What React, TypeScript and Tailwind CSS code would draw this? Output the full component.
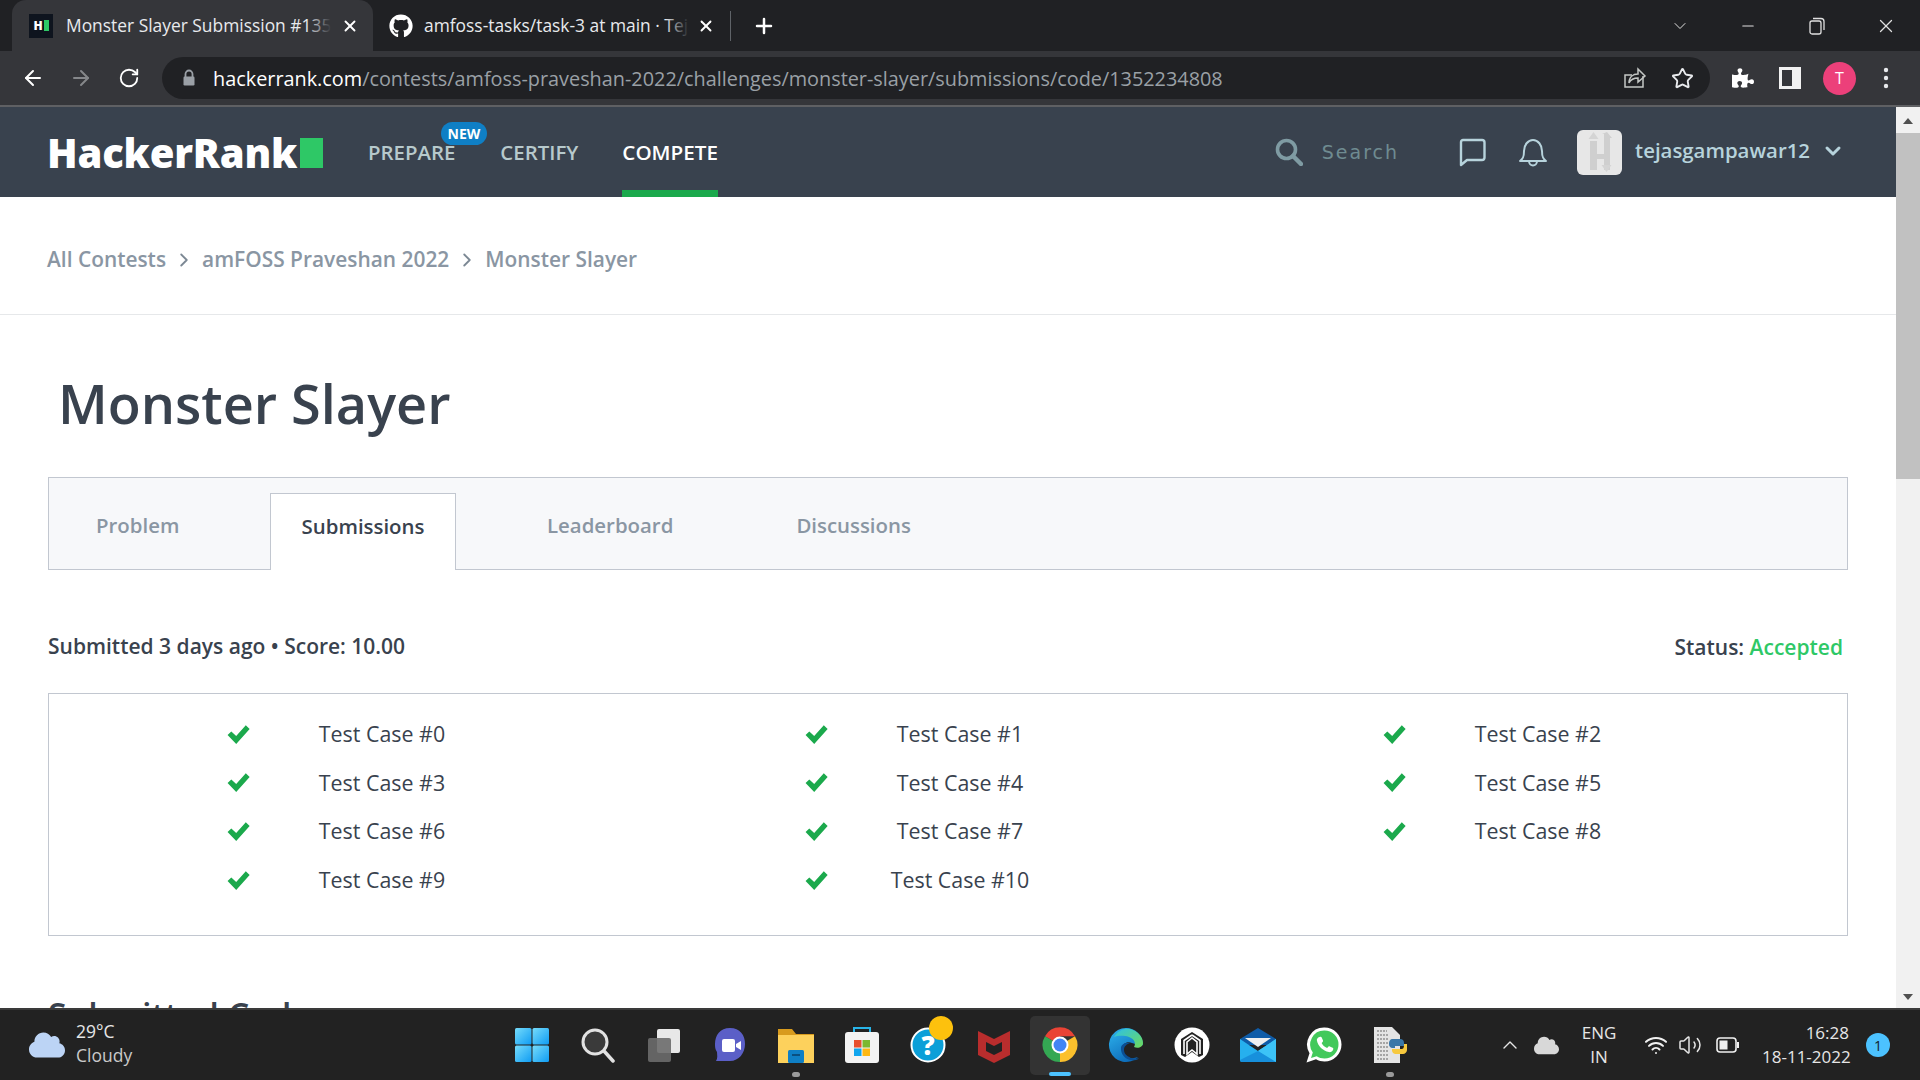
import React from "react";
import { ArrowLeft, ArrowRight, RotateCw, Star, X, Plus, Minus, ChevronDown, ChevronUp, ChevronRight, Volume2, Wifi } from "lucide-react";
import { FaGithub, FaPuzzlePiece, FaCloud } from "react-icons/fa";

const font = { fontFamily: '"Open Sans", "Noto Sans", sans-serif' };

function Lock() {
  return (
    <svg width="14" height="18" viewBox="0 0 14 18">
      <path d="M3.5 8V5a3.5 3.5 0 0 1 7 0v3" fill="none" stroke="#9aa0a6" strokeWidth="1.8" />
      <rect x="1.5" y="7.5" width="11" height="9" rx="1.2" fill="#9aa0a6" />
    </svg>
  );
}

function Share() {
  return (
    <svg width="24" height="24" viewBox="0 0 24 24" fill="none" stroke="#c4c7c5" strokeWidth="1.5">
      <path d="M20 10v11H2V9h7" />
      <path d="M6 17c0-6 4-9 9-9V3l7 7-7 6v-4c-4 0-7 1-9 5z" />
    </svg>
  );
}

function Check() {
  return (
    <svg width="25" height="21" viewBox="0 0 24 20">
      <path d="M1.5 10.5l3.6-3.4 4.7 4.4L19 1.2l3.7 3.6L9.8 19z" fill="#1ba94c" />
    </svg>
  );
}

function TestCase({ n }: { n: number }) {
  return (
    <div className="flex items-center h-[48.6px]">
      <div className="w-[47px] flex justify-center shrink-0"><Check /></div>
      <div className="w-[240px] text-center text-[21.4px] text-[#39424e]">Test Case #{n}</div>
    </div>
  );
}

function Windows() {
  return (
    <svg width="36" height="36" viewBox="0 0 36 36">
      <defs>
        <linearGradient id="w" x1="0" y1="0" x2="1" y2="1">
          <stop offset="0" stopColor="#76dcfb" />
          <stop offset="1" stopColor="#0f9cf3" />
        </linearGradient>
      </defs>
      <rect x="1" y="1" width="16.5" height="16.5" rx="1.5" fill="url(#w)" />
      <rect x="18.5" y="1" width="16.5" height="16.5" rx="1.5" fill="url(#w)" />
      <rect x="1" y="18.5" width="16.5" height="16.5" rx="1.5" fill="url(#w)" />
      <rect x="18.5" y="18.5" width="16.5" height="16.5" rx="1.5" fill="url(#w)" />
    </svg>
  );
}
function TbSearch() {
  return (
    <svg width="36" height="36" viewBox="0 0 36 36">
      <circle cx="15" cy="15" r="12" fill="#3a3a3a" stroke="#e2e2e2" strokeWidth="3" />
      <path d="M24 24l9 10" stroke="#e2e2e2" strokeWidth="3.5" strokeLinecap="round" />
    </svg>
  );
}
function TaskView() {
  return (
    <svg width="36" height="36" viewBox="0 0 36 36">
      <rect x="11" y="2" width="23" height="24" rx="2" fill="#e8e8e8" />
      <rect x="2" y="11" width="23" height="24" rx="2" fill="#6b6b6b" fillOpacity="0.9" />
    </svg>
  );
}
function Chat() {
  return (
    <svg width="36" height="36" viewBox="0 0 36 36">
      <path d="M18 1c10 0 15 7 15 16s-6 17-15 17H4c2-3 1-6 1-9-2-3-2-5-2-8C3 8 8 1 18 1z" fill="#5b5fc7" />
      <rect x="10" y="12" width="13" height="13" rx="2" fill="#fff" />
      <path d="M24 17l5-3v9l-5-3z" fill="#fff" />
    </svg>
  );
}
function Files() {
  return (
    <svg width="36" height="36" viewBox="0 0 36 36">
      <path d="M0 2h14l4 5h18v29H0z" fill="#d89b1e" />
      <rect x="0" y="8" width="36" height="28" fill="#fdd15c" />
      <rect x="10" y="23" width="16" height="13" rx="1.5" fill="#0f7fc5" />
      <rect x="14" y="27" width="8" height="2" fill="#0a4f80" />
    </svg>
  );
}
function Store() {
  return (
    <svg width="36" height="38" viewBox="0 0 36 38">
      <path d="M10 7V2h16v5" fill="none" stroke="#28b4e8" strokeWidth="2" />
      <rect x="1" y="6" width="34" height="31" rx="3" fill="#f3f3f3" />
      <rect x="10" y="14" width="7.5" height="7.5" fill="#e8502f" />
      <rect x="18.5" y="14" width="7.5" height="7.5" fill="#7cb82f" />
      <rect x="10" y="22.5" width="7.5" height="7.5" fill="#10a5ee" />
      <rect x="18.5" y="22.5" width="7.5" height="7.5" fill="#fdb813" />
    </svg>
  );
}
function Help() {
  return (
    <div className="relative w-[36px] h-[36px]">
      <svg width="36" height="36" viewBox="0 0 36 36">
        <circle cx="18" cy="18" r="16.5" fill="#0b9fd8" stroke="#fff" strokeWidth="2" />
      </svg>
      <span className="absolute inset-0 flex items-center justify-center text-white font-extrabold text-[26px]">?</span>
      <span className="absolute -top-[11px] left-[19px] w-[24px] h-[24px] rounded-full bg-[#fdc10d]" />
    </div>
  );
}
function McAfee() {
  return (
    <svg width="32" height="36" viewBox="0 0 32 36">
      <path d="M0 4l16 8 16-8v24l-16 8-16-8z" fill="#b92d2d" />
      <path d="M8 15l8 4 8-4v9l-8 4-8-4z" fill="#222222" />
    </svg>
  );
}
function Chrome() {
  return (
    <svg width="36" height="36" viewBox="0 0 36 36">
      <path d="M18 18L3 9.3A17 17 0 0 1 33 9.3H18z" fill="#ea4335" />
      <path d="M18 18L33 9.3A17 17 0 0 1 18 35z" fill="#fbc02d" />
      <path d="M18 18v17A17 17 0 0 1 3 9.3z" fill="#34a853" />
      <circle cx="18" cy="18" r="8.5" fill="#fff" />
      <circle cx="18" cy="18" r="6.5" fill="#4285f4" />
    </svg>
  );
}
function Edge() {
  return (
    <svg width="36" height="36" viewBox="0 0 36 36">
      <defs>
        <linearGradient id="e" x1="0" y1="0" x2="0.6" y2="1">
          <stop offset="0" stopColor="#2fb5ef" />
          <stop offset="1" stopColor="#0c6ab8" />
        </linearGradient>
        <linearGradient id="e2" x1="0" y1="0" x2="1" y2="1">
          <stop offset="0" stopColor="#2cc0e8" />
          <stop offset="1" stopColor="#6fdb58" />
        </linearGradient>
      </defs>
      <path d="M18 1a17 17 0 1 0 12 29c-7 3-16 0-16-8 0-5 5-8 10-6 5 1 7 4 11 2A17 17 0 0 0 18 1z" fill="url(#e)" />
      <path d="M6 10C10 3 17 1 22 2c8 2 13 8 13 14 0 4-5 6-9 4 2-3 1-8-5-10-6-2-12-1-15 0z" fill="url(#e2)" />
      <path d="M13 20c-1 8 6 15 15 13 1 0 2-1 3-2-7 2-15-2-15-8 0-4 3-6 6-7-4-1-8 1-9 4z" fill="#0b4f94" />
    </svg>
  );
}
function WhiteApp() {
  return (
    <svg width="36" height="36" viewBox="0 0 36 36">
      <circle cx="18" cy="18" r="17.5" fill="#fff" />
      <path d="M18 5l-11 7v16l4 2 7-5 7 5 4-2V12z" fill="#222222" />
      <path d="M18 8l-8 5.5V27M18 8l8 5.5V27M13 15l5-4 5 4v12l-5-4-5 4z" fill="none" stroke="#fff" strokeWidth="1.6" />
    </svg>
  );
}
function Mail() {
  return (
    <svg width="36" height="36" viewBox="0 0 36 36">
      <path d="M0 12L18 1l18 11v6H0z" fill="#0f5ca8" />
      <path d="M5 11h26L18 20z" fill="#efefef" />
      <path d="M0 12l18 12 18-12v21a2 2 0 0 1-2 2H2a2 2 0 0 1-2-2z" fill="#26b0ee" />
      <path d="M18 24l18-12v23H34z" fill="#3cc3f7" />
      <path d="M0 33l18-9 18 11H2a2 2 0 0 1-2-2z" fill="#1790dc" />
    </svg>
  );
}
function WhatsApp() {
  return (
    <svg width="36" height="36" viewBox="0 0 36 36">
      <path d="M18.5 0.5a17 17 0 0 1 0 34c-3 0-6-.8-8.500-2.200L0.500 35.500l3-9.300A17 17 0 0 1 18.500 0.500z" fill="#fff" />
      <path d="M18.500 3.500a14 14 0 0 1 0 28c-3 0-5.500-.8-7.800-2.200l-5.700 1.800 1.800-5.500A14 14 0 0 1 18.500 3.500z" fill="#42c95b" />
      <path d="M13.500 10c1-.5 1.800-.5 2.200.4l1.300 3c.2.600 0 1-.4 1.500l-1 1.100c1 2 3 4 5.500 5l1.200-1.300c.5-.5 1-.5 1.500-.3l2.800 1.400c.8.400.8 1 .5 2-.6 1.800-2.500 2.600-4.200 2.300-6-1-11-6-12-11.500-.3-1.600.7-3 2.600-3.600z" fill="#fff" />
    </svg>
  );
}
function PyFile() {
  return (
    <svg width="36" height="38" viewBox="0 0 36 38">
      <path d="M2 1h18l8 8v28H2z" fill="#e4e4e4" />
      <path d="M5 5h10M5 9h12M5 13h12M5 17h12M5 21h12M5 25h12M5 29h12M5 33h12" stroke="#666" strokeWidth="1" strokeDasharray="2 1" />
      <path d="M21 13h7a4 4 0 0 1 4 4v3H23v2h-3a4 4 0 0 1-3-4c0-3 1-5 4-5z" fill="#3a77a8" />
      <path d="M32 18h3v6c0 2-2 4-4 4h-8a4 4 0 0 1-3-3v-2h10c2 0 2-3 2-5z" fill="#f7c93e" />
    </svg>
  );
}

const tb = [
  { el: <Windows /> },
  { el: <TbSearch /> },
  { el: <TaskView /> },
  { el: <Chat /> },
  { el: <Files />, dot: true },
  { el: <Store /> },
  { el: <Help /> },
  { el: <McAfee /> },
  { el: <Chrome />, active: true },
  { el: <Edge /> },
  { el: <WhiteApp /> },
  { el: <Mail /> },
  { el: <WhatsApp /> },
  { el: <PyFile />, dot: true },
];

export default function App() {
  return (
    <div className="w-[1920px] h-[1080px] overflow-hidden flex flex-col bg-white" style={font}>
      {/* tab strip */}
      <div className="h-[51px] shrink-0 bg-[#202124] flex items-end pl-3 text-[17.4px] text-[#e8eaed]">
        <div className="relative w-[361px] h-[51px] bg-[#35363a] rounded-t-[14px] flex items-center pl-[17px] pr-[14px] shrink-0">
          <div className="w-[24px] h-[24px] bg-[#0e141e] flex items-center justify-center gap-[1px] shrink-0">
            <span className="text-white text-[12px] font-extrabold leading-none">H</span>
            <span className="w-[5px] h-[11px] bg-[#2ec866]" />
          </div>
          <span className="relative ml-[13px] w-[265px] overflow-hidden whitespace-nowrap shrink-0">
            Monster Slayer Submission #1352234808
            <span className="absolute right-0 top-0 bottom-0 w-[24px] bg-gradient-to-r from-transparent to-[#35363a]" />
          </span>
          <X size={18} strokeWidth={2.5} className="ml-auto text-white" />
        </div>
        <div className="h-[51px] flex items-center pl-[16px] w-[420px] shrink-0">
          <FaGithub size={24} color="#fff" className="shrink-0" />
          <span className="relative ml-[11px] w-[265px] overflow-hidden whitespace-nowrap shrink-0">
            amfoss-tasks/task-3 at main · Tejas
            <span className="absolute right-0 top-0 bottom-0 w-[24px] bg-gradient-to-r from-transparent to-[#202124]" />
          </span>
          <X size={18} strokeWidth={2.5} className="ml-[8px] text-white shrink-0" />
          <span className="ml-[15px] w-px h-[30px] bg-[#5f6368] shrink-0" />
          <Plus size={24} strokeWidth={2.5} className="ml-[21px] text-white shrink-0" />
        </div>
        <div className="flex-1 flex items-center h-[51px] text-[#e0e0e0] justify-end">
          <ChevronDown size={20} strokeWidth={1.2} className="mr-[49px]" />
          <Minus size={18} strokeWidth={1.4} className="mr-[52px]" />
          <svg width="16" height="18" viewBox="0 0 16 18" fill="none" stroke="#e0e0e0" strokeWidth="1.3" className="mr-[50px]">
            <rect x="1" y="4" width="11" height="13" rx="2" />
            <path d="M4 1.500h8a3 3 0 0 1 3 3V13" />
          </svg>
          <X size={22} strokeWidth={1.4} className="mr-[23px]" />
        </div>
      </div>
      {/* toolbar */}
      <div className="h-[54px] shrink-0 bg-[#35363a] flex items-center text-[#e8eaed]">
        <ArrowLeft size={24} className="ml-[21px] text-white" />
        <ArrowRight size={24} className="ml-[24px] text-[#85878a]" />
        <RotateCw size={22} className="ml-[25px] text-white" />
        <div className="ml-[22px] w-[1548px] h-[42px] bg-[#202124] rounded-full flex items-center pl-[20px] pr-[16px] text-[19.85px]">
          <Lock />
          <span className="ml-[17px] text-white mt-[1px]">hackerrank.com</span>
          <span className="text-[#9aa0a6] mt-[1px]">/contests/amfoss-praveshan-2022/challenges/monster-slayer/submissions/code/1352234808</span>
          <span className="ml-auto"><Share /></span>
          <Star size={23} className="ml-[24px] text-[#e8eaed]" />
        </div>
        <FaPuzzlePiece size={22} color="#fff" className="ml-[22px]" />
        <svg width="22" height="22" viewBox="0 0 22 22" className="ml-[25px]">
          <rect x="1.500" y="1.500" width="19" height="19" fill="#35363a" stroke="#f1f1f1" strokeWidth="3" />
          <rect x="13" y="1.500" width="7.500" height="19" fill="#f1f1f1" />
        </svg>
        <div className="ml-[22px] w-[33px] h-[33px] rounded-full bg-[#ec407a] flex items-center justify-center text-white text-[16px]">T</div>
        <svg width="6" height="22" viewBox="0 0 6 22" className="ml-[27px]">
          <circle cx="3" cy="3" r="2.200" fill="#e8eaed" /><circle cx="3" cy="11" r="2.200" fill="#e8eaed" /><circle cx="3" cy="19" r="2.200" fill="#e8eaed" />
        </svg>
      </div>
      <div className="h-[2px] shrink-0 bg-[#5f6063]" />
      {/* page */}
      <div className="flex-1 min-h-0 flex">
        <div className="flex-1 min-w-0 overflow-hidden">
          {/* header */}
          <div className="h-[90px] bg-[#39424e] flex items-stretch pl-[47px]">
            <div className="w-[276px] flex items-center pt-[2px]">
              <span className="text-white text-[40px] font-extrabold leading-none tracking-[-0.2px]">HackerRank</span>
              <span className="ml-auto w-[23px] h-[30px] bg-[#2ec866] shrink-0" />
            </div>
            <div className="relative ml-[45px] flex items-center pt-[1px] text-[20.4px] font-semibold text-[#b7c9cc]">PREPARE
              <span className="absolute left-[73px] top-[15px] w-[46px] h-[23px] rounded-full bg-[#0f7fc5] text-white text-[14px] font-bold flex items-center justify-center">NEW</span>
            </div>
            <div className="ml-[45px] flex items-center pt-[1px] text-[20.4px] font-semibold text-[#b7c9cc]">CERTIFY</div>
            <div className="ml-[44px] flex items-center text-[20.6px] font-semibold text-white border-b-[7px] border-[#1ba94c] pt-[8px]">COMPETE</div>
            <div className="ml-auto flex items-center pr-[51px]">
              <svg width="28" height="28" viewBox="0 0 28 28" fill="none" stroke="#7f9ba3" strokeWidth="3.600">
                <circle cx="11.500" cy="11.500" r="9" />
                <path d="M18 18l8 8" strokeWidth="4.500" strokeLinecap="round" />
              </svg>
              <span className="ml-[19px] text-[#6f8b91] tracking-[2px]" style={{ fontFamily: '"DejaVu Sans", sans-serif', fontSize: 19 }}>Search</span>
              <svg width="28" height="30" viewBox="0 0 28 30" fill="none" stroke="#b7d3dc" strokeWidth="2.400" className="ml-[59px]">
                <path d="M5 3h19a2.500 2.500 0 0 1 2.500 2.500v15a2.500 2.500 0 0 1-2.500 2.500H9l-6 5V5a2 2 0 0 1 2-2z" strokeLinejoin="round" />
              </svg>
              <svg width="28" height="30" viewBox="0 0 28 30" fill="none" stroke="#b7d3dc" strokeWidth="2" className="ml-[33px]">
                <path d="M1 24h26c-3-2-4-4-4-10 0-6-4-11-9-11S5 8 5 14c0 6-1 8-4 10z" strokeLinejoin="round" />
                <path d="M10 24c0 3 2 4.500 4 4.500s4-1.500 4-4.500" />
              </svg>
              <div className="ml-[30px] w-[45px] h-[45px] rounded-[6px] bg-[#e7e7e7] flex items-center justify-center">
                <svg width="30" height="40" viewBox="0 0 30 40">
                  <path d="M5 9h7v13h7V2h-2l5-2 5 6h-2v32h-6V27h-7v11H5z" fill="#cfcfcf" />
                  <path d="M8.500 0l5 7H3.500zM21.500 40l-5-7h10z" fill="#d4d4d4" />
                </svg>
              </div>
              <span className="ml-[13px] text-[20.4px] font-semibold text-[#b7d3dc] mb-[3px]">tejasgampawar12</span>
              <ChevronDown size={24} strokeWidth={3} className="ml-[11px] text-[#b7d3dc] mb-[3px]" />
            </div>
          </div>
          {/* breadcrumbs */}
          <div className="h-[118px] pt-[9px] border-b border-[#e6e8ea] flex items-center pl-[47px] text-[20.9px] font-semibold text-[#8a96a3]">
            <span>All Contests</span>
            <ChevronRight size={22} strokeWidth={2} className="mx-[7px] text-[#7c8894]" />
            <span>amFOSS Praveshan 2022</span>
            <ChevronRight size={22} strokeWidth={2} className="mx-[7px] text-[#7c8894]" />
            <span>Monster Slayer</span>
          </div>
          <div className="pl-[48px] pr-[48px]">
            <h1 className="pt-[52px] pl-[10px] text-[54px] font-semibold leading-[72px] text-[#39424e]">Monster Slayer</h1>
            {/* tabs */}
            <div className="mt-[38px] h-[93px] bg-[#f7f8fa] border border-[#c2c7d0] flex items-end pl-0 text-[20.4px] font-semibold text-[#8a96a3]">
              <div className="w-[221px] h-[77px] flex items-center pl-[47px] pb-[11px]">Problem</div>
              <div className="w-[186px] h-[77px] -mb-px bg-white border border-b-0 border-[#c2c7d0] flex items-center justify-center pb-[11px] text-[#39424e]">Submissions</div>
              <div className="ml-[91px] h-[77px] flex items-center pb-[11px]">Leaderboard</div>
              <div className="ml-[123px] h-[77px] flex items-center pb-[11px]">Discussions</div>
            </div>
            <div className="mt-[61px] flex items-center justify-between h-[32px] text-[21px] font-semibold text-[#39424e]">
              <span>Submitted 3 days ago • Score: 10.00</span>
              <span className="mr-[5px] mt-[2px]">Status: <span className="text-[#2ec866]">Accepted</span></span>
            </div>
            {/* test cases */}
            <div className="mt-[30px] h-[243px] border border-[#c2c7d0] pt-[16px] pl-[166px] grid grid-cols-[578px_578px_auto] content-start">
              {[0, 1, 2, 3, 4, 5, 6, 7, 8, 9, 10].map((n) => (
                <TestCase key={n} n={n} />
              ))}
            </div>
            <h2 className="mt-[59px] text-[34px] font-semibold text-[#39424e] leading-[40px]">Submitted Code</h2>
          </div>
        </div>
        {/* scrollbar */}
        <div className="w-[24px] shrink-0 bg-[#f1f1f1] flex flex-col items-center">
          <svg width="10" height="6" viewBox="0 0 10 6" className="mt-[11px]"><path d="M5 0l5 6H0z" fill="#505050" /></svg>
          <div className="mt-[9px] w-full h-[346px] bg-[#c1c1c1]" />
          <svg width="10" height="6" viewBox="0 0 10 6" className="mt-auto mb-[8px]"><path d="M5 6L0 0h10z" fill="#505050" /></svg>
        </div>
      </div>
      {/* taskbar */}
      <div className="h-[72px] shrink-0 bg-[#222222] border-t-2 border-[#3a3a3a] flex items-center text-white relative">
        <div className="w-[499px] shrink-0 flex items-center pl-[29px]">
          <FaCloud size={36} color="#bcd4f5" />
          <div className="ml-[11px] text-[17.5px] leading-[24px] text-[#e6e6e6] -mt-[5px]">
            <div>29°C</div>
            <div className="text-[#c9c9c9]">Cloudy</div>
          </div>
        </div>
        <div className="flex items-center">
          {tb.map((t, i) => (
            <div key={i} className={"relative w-[60px] mx-[3px] h-[59px] flex items-center justify-center rounded-[5px] " + (t.active ? "bg-[#333333]" : "")}>
              {t.el}
              {t.dot && <span className="absolute bottom-[-2px] w-[8px] h-[5px] rounded-full bg-[#9a9a9a]" />}
              {t.active && <span className="absolute bottom-[-1px] w-[22px] h-[4px] rounded-full bg-[#4cc2ff]" />}
            </div>
          ))}
        </div>
        <div className="ml-auto flex items-center pr-[30px] text-[17px]">
          <ChevronUp size={24} strokeWidth={1.4} className="text-[#e6e6e6]" />
          <FaCloud size={25} color="#d8d8d8" className="ml-[12px]" />
          <div className="ml-[18px] w-[44px] text-center leading-[24px] text-[#e6e6e6]">
            <div>ENG</div><div>IN</div>
          </div>
          <Wifi size={24} className="ml-[23px] text-[#f1f1f1]" />
          <Volume2 size={24} strokeWidth={1.5} className="ml-[10px] text-[#e6e6e6]" />
          <svg width="24" height="18" viewBox="0 0 24 18" fill="none" className="ml-[14px]">
            <rect x="1" y="2" width="19" height="14" rx="3" stroke="#f1f1f1" strokeWidth="1.600" />
            <rect x="3.500" y="4.500" width="8" height="9" fill="#f1f1f1" />
            <rect x="21" y="6" width="2" height="6" fill="#f1f1f1" />
          </svg>
          <div className="ml-[22px] w-[87px] text-right leading-[24px] text-[#e6e6e6] whitespace-nowrap">
            <div>16:28</div><div>18-11-2022</div>
          </div>
          <div className="ml-[17px] w-[24px] h-[24px] rounded-full bg-[#4cc2ff] text-[#10222c] text-[14px] flex items-center justify-center">1</div>
        </div>
      </div>
    </div>
  );
}
